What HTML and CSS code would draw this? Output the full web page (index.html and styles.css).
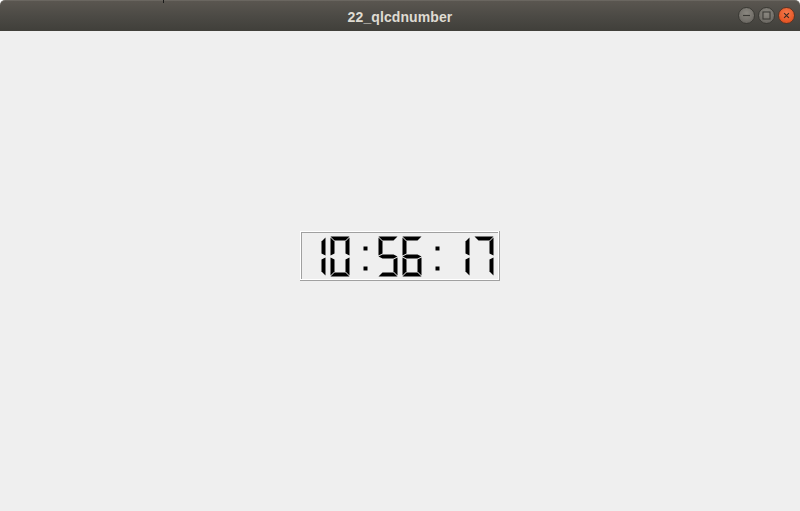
FILE: index.html
```html
<!DOCTYPE html>
<html>
<head>
<meta charset="utf-8">
<title>22_qlcdnumber</title>
<link rel="stylesheet" href="styles.css">
</head>
<body>
<div class="window">
  <div class="titlebar">
    <span class="tick"></span>
    <span class="title">22_qlcdnumber</span>
    <div class="controls">
      <span class="btn btn-min"><svg width="17" height="17" viewBox="0 0 17 17"><line x1="4.5" y1="8.5" x2="12.5" y2="8.5" stroke="#3a3935" stroke-width="1.3"/></svg></span>
      <span class="btn btn-max"><svg width="17" height="17" viewBox="0 0 17 17"><rect x="4.5" y="4.5" width="8" height="8" fill="none" stroke="#3a3935" stroke-width="1.2"/></svg></span>
      <span class="btn btn-close"><svg width="17" height="17" viewBox="0 0 17 17"><path d="M5.8 5.8 L11.2 11.2 M11.2 5.8 L5.8 11.2" stroke="#3a2a22" stroke-width="1.3"/></svg></span>
    </div>
  </div>
  <div class="content">
    <svg class="lcd" width="200" height="50" viewBox="0 0 200 50">
      <defs>
        <polygon id="s0" points="0,0 19,0 15,4 4,4"/>
        <polygon id="s1" points="0,1 4,5 4,17 0,19"/>
        <polygon id="s2" points="19,1 19,19 15,17 15,5"/>
        <polygon id="s3" points="0,20 4,18 15,18 19,20 15,22 4,22"/>
        <polygon id="s4" points="0,21 4,23 4,35 0,39"/>
        <polygon id="s5" points="19,21 19,39 15,35 15,23"/>
        <polygon id="s6" points="0,40 4,36 15,36 19,40"/>
        <rect id="s8" x="9" y="10" width="4" height="4"/>
        <rect id="s9" x="9" y="30" width="4" height="4"/>
      </defs>
      <rect x="0" y="0" width="199" height="1" fill="#ffffff"/>
      <rect x="0" y="0" width="1" height="49" fill="#ffffff"/>
      <rect x="0" y="48" width="199" height="1" fill="#ffffff"/>
      <rect x="198" y="0" width="1" height="49" fill="#ffffff"/>
      <rect x="1" y="1" width="197" height="1" fill="#a0a0a0"/>
      <rect x="1" y="2" width="1" height="46" fill="#a0a0a0"/>
      <rect x="0" y="49" width="200" height="1" fill="#a0a0a0"/>
      <rect x="199" y="0" width="1" height="49" fill="#a0a0a0"/>
      <g class="seg">
        <g transform="translate(6.5,5.5)"><use href="#s2"/><use href="#s5"/></g>
        <g transform="translate(30.5,5.5)"><use href="#s0"/><use href="#s1"/><use href="#s2"/><use href="#s4"/><use href="#s5"/><use href="#s6"/></g>
        <g transform="translate(54.5,5.5)"><use href="#s8"/><use href="#s9"/></g>
        <g transform="translate(78.5,5.5)"><use href="#s0"/><use href="#s1"/><use href="#s3"/><use href="#s5"/><use href="#s6"/></g>
        <g transform="translate(102.5,5.5)"><use href="#s0"/><use href="#s1"/><use href="#s3"/><use href="#s4"/><use href="#s5"/><use href="#s6"/></g>
        <g transform="translate(126.5,5.5)"><use href="#s8"/><use href="#s9"/></g>
        <g transform="translate(150.5,5.5)"><use href="#s2"/><use href="#s5"/></g>
        <g transform="translate(174.5,5.5)"><use href="#s0"/><use href="#s2"/><use href="#s5"/></g>
      </g>
    </svg>
  </div>
</div>
</body>
</html>
```
FILE: styles.css
```css
html, body {
  margin: 0;
  padding: 0;
  width: 800px;
  height: 511px;
  overflow: hidden;
  background: #ffffff;
}
.window {
  display: flex;
  flex-direction: column;
  width: 800px;
  height: 511px;
}
.titlebar {
  position: relative;
  flex: 0 0 31px;
  height: 31px;
  box-sizing: border-box;
  border-radius: 5px 5px 0 0;
  border-top: 1px solid #6a6660;
  background: linear-gradient(to bottom, #5a5650 0%, #4c4a45 50%, #403f3a 100%);
  display: flex;
  align-items: center;
  justify-content: center;
}
.tick {
  position: absolute;
  left: 163px;
  top: -1px;
  width: 1px;
  height: 3px;
  background: #1a1a1a;
}
.title {
  font-family: "Liberation Sans", Arial, sans-serif;
  font-weight: bold;
  font-size: 14px;
  color: #dfdbd2;
  letter-spacing: 0.1px;
  margin-top: 1px;
}
.controls {
  position: absolute;
  right: 5px;
  top: 6px;
  display: flex;
  gap: 3px;
}
.btn {
  width: 17px;
  height: 17px;
  border-radius: 50%;
  box-sizing: border-box;
  display: flex;
  align-items: center;
  justify-content: center;
}
.btn svg {
  display: block;
}
.btn-min, .btn-max {
  background: radial-gradient(circle at 50% 35%, #8a8780 0%, #73706a 60%, #5f5c57 100%);
  border: 1px solid #3a3934;
}
.btn-close {
  background: radial-gradient(circle at 50% 35%, #f37a4e 0%, #e95b2a 60%, #d4481a 100%);
  border: 1px solid #5a3425;
}
.content {
  flex: 1;
  background: #efefef;
  display: flex;
  flex-direction: column;
  align-items: center;
  padding-top: 200px;
}
.lcd {
  display: block;
}
.seg {
  fill: #000000;
}
```
